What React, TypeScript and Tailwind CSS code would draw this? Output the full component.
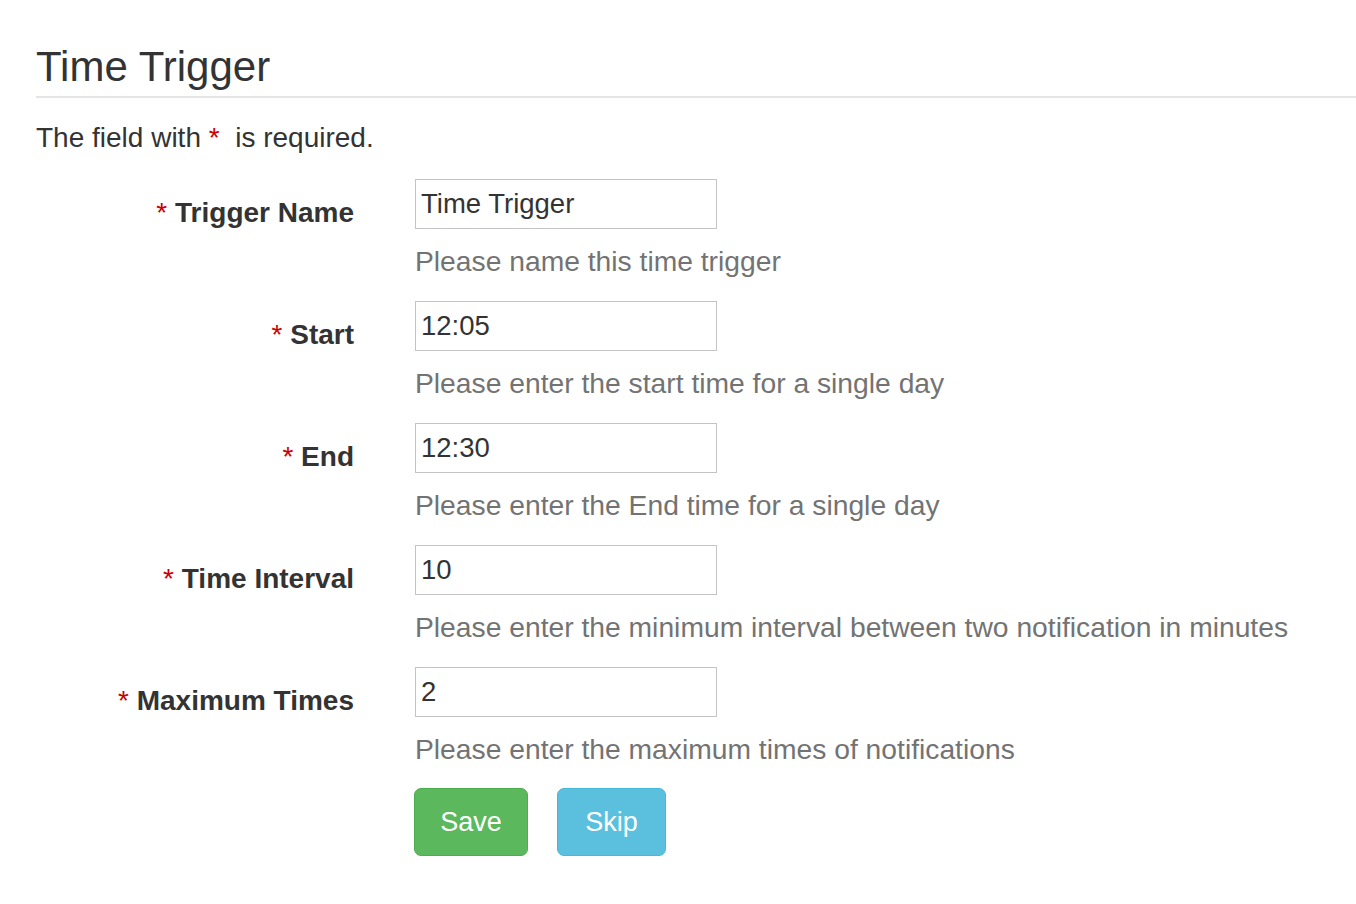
import { useState } from 'react';

interface Field {
  key: string;
  label: string;
  value: string;
  help: string;
}

const fields: Field[] = [
  { key: 'name', label: 'Trigger Name', value: 'Time Trigger', help: 'Please name this time trigger' },
  { key: 'start', label: 'Start', value: '12:05', help: 'Please enter the start time for a single day' },
  { key: 'end', label: 'End', value: '12:30', help: 'Please enter the End time for a single day' },
  { key: 'interval', label: 'Time Interval', value: '10', help: 'Please enter the minimum interval between two notification in minutes' },
  { key: 'max', label: 'Maximum Times', value: '2', help: 'Please enter the maximum times of notifications' },
];

export default function App() {
  const [values, setValues] = useState<Record<string, string>>(
    Object.fromEntries(fields.map((f) => [f.key, f.value]))
  );

  return (
    <div className="min-h-screen bg-white text-[#333] font-['Liberation_Sans',Helvetica,Arial,sans-serif]">
      {/* Header */}
      <div className="pl-[36px] pt-[46px]">
        <h2 className="text-[42px] leading-[42px] font-normal pb-[8px] border-b-2 border-[#e5e5e5]">
          Time Trigger
        </h2>
        <p className="mt-[20px] text-[28px] leading-[40px]">
          The field with <span className="text-[#cc0000]">*</span>&nbsp; is required.
        </p>
      </div>

      {/* Form */}
      <form className="mt-[21px]" onSubmit={(e) => e.preventDefault()}>
        {fields.map((field) => (
          <div key={field.key} className="flex mb-[20px]">
            <label className="w-[354px] shrink-0 text-right pt-[14px] text-[28px] leading-[40px] font-bold">
              <span className="text-[#cc0000] font-normal">*</span> {field.label}
            </label>
            <div className="ml-[61px]">
              <input
                type="text"
                value={values[field.key]}
                onChange={(e) => setValues({ ...values, [field.key]: e.target.value })}
                className="block w-[302px] h-[50px] border border-[#c4c4c4] pl-[5px] text-[27.5px] text-[#333] outline-none"
              />
              <p className="mt-[12px] text-[28.25px] leading-[40px] text-[#737373] whitespace-nowrap">
                {field.help}
              </p>
            </div>
          </div>
        ))}

        {/* Buttons */}
        <div className="flex gap-[29px] pl-[414px] -mt-[1px]">
          <button
            type="submit"
            className="w-[114px] h-[68px] flex items-center justify-center rounded-[7px] border border-[#4cae4c] bg-[#5cb85c] text-white text-[27px]"
          >
            Save
          </button>
          <button
            type="button"
            className="w-[109px] h-[68px] flex items-center justify-center rounded-[7px] border border-[#46b8da] bg-[#5bc0de] text-white text-[27px]"
          >
            Skip
          </button>
        </div>
      </form>
    </div>
  );
}
